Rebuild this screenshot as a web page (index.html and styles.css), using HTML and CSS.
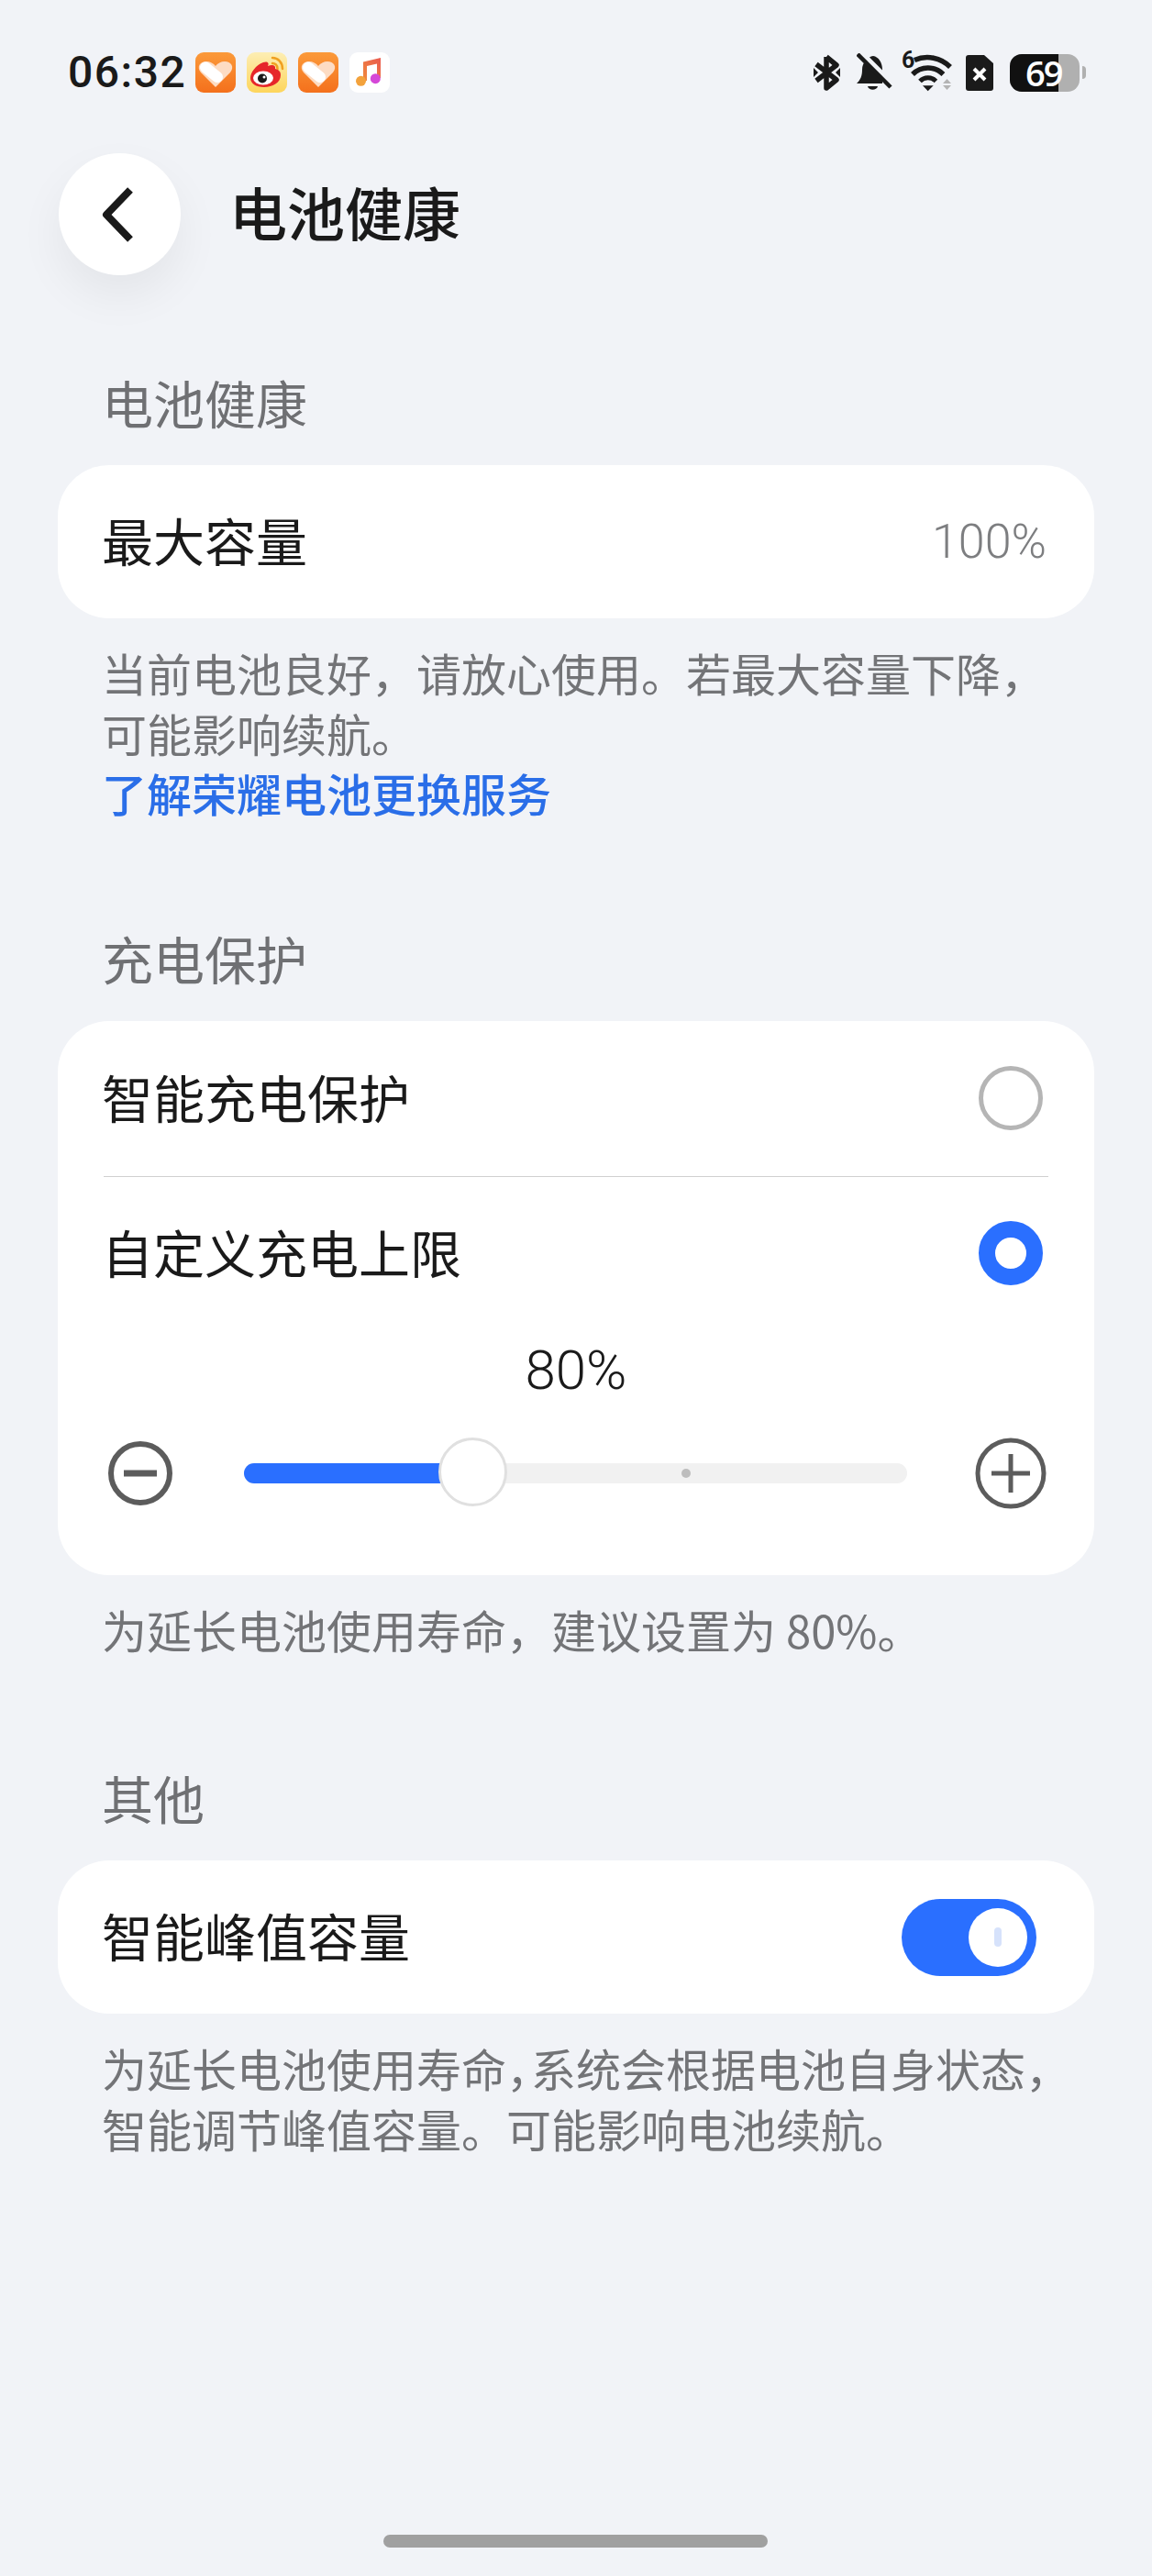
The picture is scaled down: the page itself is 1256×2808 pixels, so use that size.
FILE: index.html
```html
<!DOCTYPE html>
<html lang="zh-CN">
<head>
<meta charset="UTF-8">
<meta name="viewport" content="width=device-width, initial-scale=1.0">
<title>电池健康</title>
<link rel="stylesheet" href="styles.css">
</head>
<body>

<svg class="defs" width="0" height="0" aria-hidden="true">
  <defs>
    <linearGradient id="orange" x1="0" y1="0" x2="0" y2="1">
      <stop offset="0" stop-color="#fb9a3a"/>
      <stop offset="1" stop-color="#f4701c"/>
    </linearGradient>
    <linearGradient id="yellow" x1="0" y1="0" x2="0" y2="1">
      <stop offset="0" stop-color="#fdeeb4"/>
      <stop offset="1" stop-color="#fdd55c"/>
    </linearGradient>
    <linearGradient id="beam" x1="0" y1="1" x2="1" y2="0">
      <stop offset="0" stop-color="#f08a3c"/>
      <stop offset="1" stop-color="#ea5a50"/>
    </linearGradient>
    <symbol id="health" viewBox="0 0 44 44">
      <rect width="44" height="44" rx="9" fill="url(#orange)"/>
      <path d="M22 38 L6 22 C1 16 5 10 12 10 C16 10 20 12 22 15 C24 12 28 10 32 10 C39 10 43 16 38 22 Z" fill="#fddcc3"/>
      <path d="M11 16.500 L24 27" stroke="#fff" stroke-width="12" stroke-linecap="round"/>
    </symbol>
  </defs>
</svg>

<header class="status-bar">
  <div class="status-left">
    <span class="clock">06:32</span>
    <svg class="app-icon"><use href="#health"/></svg>
    <svg class="app-icon" viewBox="0 0 44 44">
      <rect width="44" height="44" rx="9" fill="url(#yellow)"/>
      <path d="M28 6C34 6 39 11 39 18M28 12C31 12 33.500 14 33.500 18" fill="none" stroke="#f0a020" stroke-width="2.500" stroke-linecap="round"/>
      <path d="M4 28c0-6 6-14 14-17 4-1.500 7 0 5 4 5-2 9-1 8 3 4 1 6 3 6 7 0 8-9 13-18 13S4 34 4 28z" fill="#e6262a"/>
      <ellipse cx="18" cy="28" rx="11" ry="7.500" fill="#fff"/>
      <circle cx="17" cy="28.500" r="5" fill="#1a1a1a"/>
      <circle cx="19" cy="27" r="1.500" fill="#fff"/>
    </svg>
    <svg class="app-icon"><use href="#health"/></svg>
    <svg class="app-icon" viewBox="0 0 44 44">
      <rect width="44" height="44" rx="9" fill="#fff"/>
      <path d="M15 10.500 L34 6 V28 H30 V12.500 L19 15 V31 H15 Z" fill="url(#beam)"/>
      <circle cx="12.500" cy="31.300" r="5.500" fill="#f3a23c"/>
      <circle cx="28.300" cy="28.700" r="5.500" fill="#d548d8"/>
    </svg>
  </div>
  <div class="status-right">
    <svg class="ic-bt" viewBox="0 0 31 40">
      <path d="M15 3 V37 L26 28 L4 11 M15 3 L26 12 L4 29" fill="none" stroke="#1a1a1a" stroke-width="5.500" stroke-linejoin="round"/>
      <path d="M1 15 L6 20 L1 25 Z M30 15 L25 20 L30 25 Z" fill="#1a1a1a"/>
    </svg>
    <svg class="ic-bell" viewBox="0 0 39 42">
      <path d="M18 3 C24 4 28 10 28 18 V33 H0 C4 29 6 25 6 18 C6 10 12 4 18 3 Z" fill="#1a1a1a"/>
      <path d="M12 36 H23 C22 41 13 41 12 36 Z" fill="#1a1a1a"/>
      <path d="M4 -2 L40 34" stroke="#f1f3f7" stroke-width="5"/>
      <path d="M1 1 L37 37" stroke="#1a1a1a" stroke-width="4.500"/>
    </svg>
    <div class="wifi">
      <span class="wifi-gen">6</span>
      <svg class="ic-wifi" viewBox="0 0 57 46">
        <path d="M14 9.500 A35 35 0 0 1 53 17" fill="none" stroke="#1a1a1a" stroke-width="5.500"/>
        <path d="M12 25 A23.500 23.500 0 0 1 45.400 25" fill="none" stroke="#1a1a1a" stroke-width="5.500"/>
        <path d="M20 32.500 A12 12 0 0 1 37.400 32.500" fill="none" stroke="#1a1a1a" stroke-width="5"/>
        <path d="M23 37.300 H34.700 L28.700 43.300 Z" fill="#1a1a1a"/>
        <path d="M45 35 L49.500 30 L54 35 Z M45 37 H54 L49.500 42 Z" fill="#b4b4b4"/>
      </svg>
    </div>
    <svg class="ic-sim" viewBox="0 0 30 39">
      <path d="M3 0 H20 L30 9 V36 A3 3 0 0 1 27 39 H3 A3 3 0 0 1 0 36 V3 A3 3 0 0 1 3 0 Z" fill="#1a1a1a"/>
      <path d="M9 15 L21 27 M21 15 L9 27" stroke="#fff" stroke-width="4"/>
    </svg>
    <div class="battery">
      <div class="battery-body">
        <div class="battery-level"></div>
        <span class="battery-text">69</span>
      </div>
      <div class="battery-cap"></div>
    </div>
  </div>
</header>

<nav class="title-bar">
  <button class="back-btn" type="button" aria-label="返回">
    <svg viewBox="0 0 36 64" width="36" height="64">
      <path d="M32 5 L6 32 L32 59" fill="none" stroke="#1a1a1a" stroke-width="8" stroke-linejoin="round"/>
    </svg>
  </button>
  <h1 class="page-title">电池健康</h1>
</nav>

<main>
  <section class="group group-health">
    <h2 class="group-label">电池健康</h2>
    <div class="card">
      <div class="row">
        <span class="row-title">最大容量</span>
        <span class="row-value">100%</span>
      </div>
    </div>
    <p class="note">当前电池良好，请放心使用。若最大容量下降，<br>可能影响续航。<br><a class="note-link" href="#">了解荣耀电池更换服务</a></p>
  </section>

  <section class="group group-charge">
    <h2 class="group-label">充电保护</h2>
    <div class="card">
      <div class="row row-line">
        <span class="row-title">智能充电保护</span>
        <span class="radio"></span>
      </div>
      <div class="row">
        <span class="row-title">自定义充电上限</span>
        <span class="radio radio-on"></span>
      </div>
      <div class="limit-value">80%</div>
      <div class="slider">
        <svg class="step-minus" viewBox="0 0 78 78">
          <circle cx="39" cy="39" r="32" fill="none" stroke="#5c5c5c" stroke-width="6"/>
          <path d="M21 39 H57" stroke="#5c5c5c" stroke-width="7"/>
        </svg>
        <div class="track">
          <div class="track-fill"></div>
          <div class="track-dot"></div>
          <div class="thumb"></div>
        </div>
        <svg class="step-plus" viewBox="0 0 78 78">
          <circle cx="39" cy="39" r="36" fill="none" stroke="#5c5c5c" stroke-width="5"/>
          <path d="M18 39 H60 M39 18 V60" stroke="#5c5c5c" stroke-width="5"/>
        </svg>
      </div>
    </div>
    <p class="note">为延长电池使用寿命，建议设置为 80%。</p>
  </section>

  <section class="group group-other">
    <h2 class="group-label">其他</h2>
    <div class="card">
      <div class="row">
        <span class="row-title">智能峰值容量</span>
        <span class="switch"><span class="switch-knob"></span></span>
      </div>
    </div>
    <p class="note">为延长电池使用寿命<span class="comma">，</span>系统会根据电池自身状态，<br>智能调节峰值容量。可能影响电池续航。</p>
  </section>
</main>

<footer class="home-area">
  <div class="home-bar"></div>
</footer>

</body>
</html>
```

FILE: styles.css
```css
/* Page */
* {
  box-sizing: border-box;
}

body {
  margin: 0;
  height: 2808px;
  overflow: hidden;
  background: #f1f3f7;
  color: #1a1a1a;
  font-family: "Noto Sans CJK SC", "Noto Sans", sans-serif;
}

.defs {
  display: block;
  height: 0;
}

/* Status bar */
.status-bar {
  display: flex;
  justify-content: space-between;
  align-items: center;
  height: 44px;
  margin-top: 57px;
  padding: 0 72px 0 74px;
}

.status-left {
  display: flex;
  align-items: center;
}

.clock {
  width: 139px;
  font-family: Roboto, sans-serif;
  font-size: 48px;
  font-weight: 500;
  letter-spacing: 1.5px;
  line-height: 44px;
}

.app-icon {
  width: 44px;
  height: 44px;
  margin-right: 12px;
}

.status-right {
  display: flex;
  align-items: center;
}

.ic-bt {
  width: 31px;
  height: 40px;
  margin-right: 17px;
}

.ic-bell {
  width: 39px;
  height: 42px;
  margin-right: 10px;
}

.wifi {
  position: relative;
  width: 57px;
  height: 46px;
  margin-right: 13px;
}

.ic-wifi {
  display: block;
  width: 57px;
  height: 46px;
}

.wifi-gen {
  position: absolute;
  left: 0;
  top: -1px;
  font-family: Roboto, sans-serif;
  font-size: 25px;
  font-weight: 700;
  line-height: 22px;
}

.ic-sim {
  width: 30px;
  height: 39px;
  margin-right: 18px;
}

.battery {
  display: flex;
  align-items: center;
  gap: 3px;
}

.battery-body {
  position: relative;
  width: 76px;
  height: 41px;
  border-radius: 13px;
  background: #b0b0b0;
}

.battery-level {
  width: 53px;
  height: 100%;
  border-radius: 13px 0 0 13px;
  background: #111;
}

.battery-text {
  position: absolute;
  left: 17px;
  top: 0;
  color: #fff;
  font-family: "Open Sans", sans-serif;
  font-size: 38px;
  font-weight: 600;
  letter-spacing: -2px;
  line-height: 41px;
}

.battery-cap {
  width: 4px;
  height: 14px;
  border-radius: 0 4px 4px 0;
  background: #b0b0b0;
}

/* Title bar */
.title-bar {
  display: flex;
  align-items: center;
  gap: 53px;
  margin-top: 66px;
  padding-left: 64px;
}

.back-btn {
  display: flex;
  justify-content: center;
  align-items: center;
  width: 133px;
  height: 133px;
  padding: 0 6px 0 0;
  border: 0;
  border-radius: 50%;
  background: #fff;
  box-shadow: 0 22px 50px rgba(0, 0, 0, 0.06);
}

.page-title {
  margin: 0;
  padding-bottom: 7px;
  font-size: 63px;
  font-weight: 500;
  line-height: 70px;
}

/* Settings groups */
.group {
  padding: 0 63px;
}

.group-health {
  margin-top: 103px;
}

.group-charge {
  margin-top: 112px;
}

.group-other {
  margin-top: 116px;
}

.group-label {
  margin: 0 0 34px 48px;
  color: #6f7073;
  font-size: 56px;
  font-weight: 400;
  line-height: 70px;
}

.card {
  padding: 0 50px;
  border-radius: 56px;
  background: #fff;
}

.row {
  display: flex;
  justify-content: space-between;
  align-items: center;
  height: 167px;
}

.row-line {
  height: 170px;
  border-bottom: 1px solid #d0d0d0;
}

.row-title {
  margin-left: -2px;
  padding-bottom: 5px;
  font-size: 56px;
  line-height: 70px;
}

.row-value {
  margin-right: 2px;
  color: #7d7e80;
  font-family: Roboto, sans-serif;
  font-size: 52px;
  font-weight: 300;
}

.radio {
  width: 70px;
  height: 70px;
  margin-right: 6px;
  border: 5px solid #b5b5b5;
  border-radius: 50%;
}

.radio-on {
  border: 18px solid #2a6fff;
}

.switch {
  display: flex;
  align-items: center;
  justify-content: flex-end;
  width: 147px;
  height: 84px;
  margin-right: 13px;
  padding-right: 10px;
  border-radius: 42px;
  background: #2a6fff;
}

.switch-knob {
  display: flex;
  justify-content: center;
  align-items: center;
  width: 64px;
  height: 64px;
  border-radius: 50%;
  background: #fff;
}

.switch-knob::after {
  content: "";
  width: 8px;
  height: 21px;
  border-radius: 4px;
  background: #d6e2fb;
}

/* Charge limit slider */
.limit-value {
  margin-top: 9px;
  font-family: Roboto, sans-serif;
  font-size: 60px;
  font-weight: 300;
  line-height: 70px;
  text-align: center;
}

.slider {
  display: flex;
  align-items: center;
  gap: 74px;
  margin: 38px 2px 0 1px;
  padding-bottom: 72px;
}

.step-minus,
.step-plus {
  flex: none;
  width: 78px;
  height: 78px;
}

.track {
  position: relative;
  flex: 1;
  height: 22px;
  border-radius: 11px;
  background: #f1f1f1;
}

.track-fill {
  width: 34.4%;
  height: 100%;
  border-radius: 11px 0 0 11px;
  background: #2a6fff;
}

.track-dot {
  position: absolute;
  left: 477px;
  top: 6px;
  width: 10px;
  height: 10px;
  border-radius: 50%;
  background: #bdbdbd;
}

.thumb {
  position: absolute;
  left: 212px;
  top: -28px;
  width: 75px;
  height: 75px;
  border: 3px solid #e0e0e0;
  border-radius: 50%;
  background: #fff;
}

.note {
  margin: 26px 0 0 48px;
  color: #737477;
  font-size: 49px;
  line-height: 65.5px;
}

.note-link {
  color: #2a6ee8;
  font-weight: 500;
  text-decoration: none;
}

.comma {
  letter-spacing: -22px;
}

/* Home indicator */
.home-area {
  position: absolute;
  left: 418px;
  top: 2763px;
}

.home-bar {
  width: 419px;
  height: 14px;
  border-radius: 7px;
  background: #a0a0a0;
}
```
